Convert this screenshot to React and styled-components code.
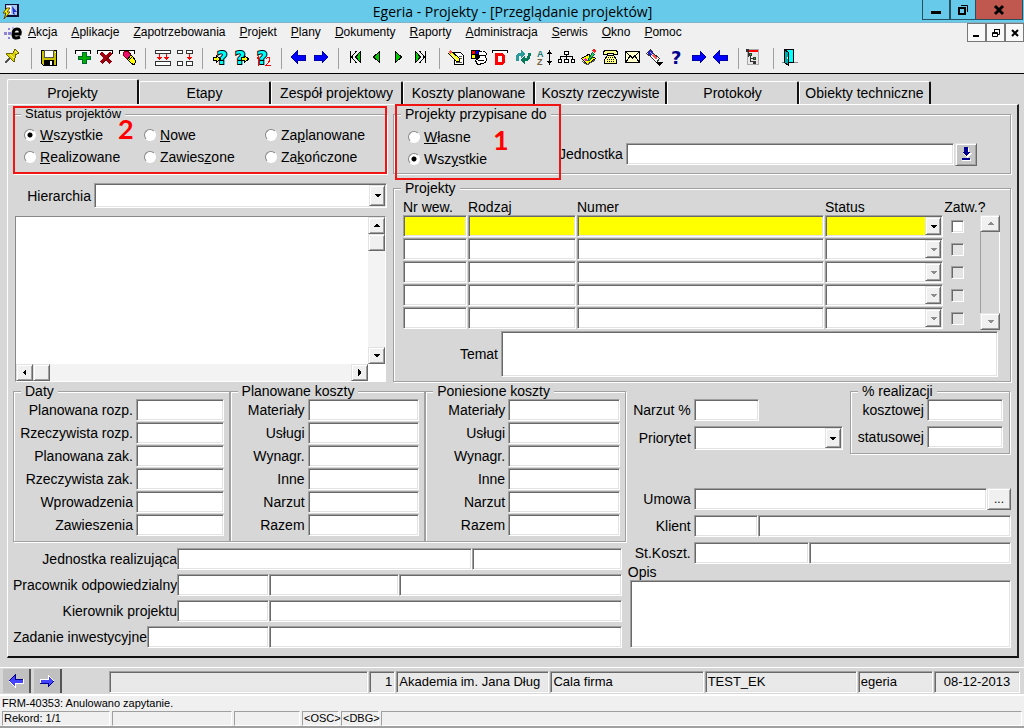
import React, { useState } from 'react'

import styled, { createGlobalStyle, css } from 'styled-components'

const GlobalStyle = createGlobalStyle`
	* {
		box-sizing: border-box;
	}
	body {
		margin: 0;
		background: #d7d7d7;
		color: #000;
		font-family: 'Liberation Sans', Arial, sans-serif;
		font-size: 14px;
		line-height: 16px;
	}
	input,
	select,
	textarea,
	button {
		font: inherit;
		color: inherit;
		margin: 0;
		padding: 0;
		border-radius: 0;
	}
`

const MENU = [
	['', 'A', 'kcja'],
	['', 'A', 'plikacje'],
	['', 'Z', 'apotrzebowania'],
	['', 'P', 'rojekt'],
	['', 'P', 'lany'],
	['', 'D', 'okumenty'],
	['', 'R', 'aporty'],
	['', 'A', 'dministracja'],
	['', 'S', 'erwis'],
	['', 'O', 'kno'],
	['', 'P', 'omoc'],
]

const TABS = [
	'Projekty',
	'Etapy',
	'Zespół projektowy',
	'Koszty planowane',
	'Koszty rzeczywiste',
	'Protokoły',
	'Obiekty techniczne',
]

const STATUSES = [
	['', 'W', 'szystkie'],
	['', 'N', 'owe'],
	['Za', 'p', 'lanowane'],
	['', 'R', 'ealizowane'],
	['Zawies', 'z', 'one'],
	['Za', 'k', 'ończone'],
]

const OWNERS = [
	['', 'W', 'łasne'],
	['Wsz', 'y', 'stkie'],
]

const DATES = [
	'Planowana rozp.',
	'Rzeczywista rozp.',
	'Planowana zak.',
	'Rzeczywista zak.',
	'Wprowadzenia',
	'Zawieszenia',
]

const COSTS = ['Materiały', 'Usługi', 'Wynagr.', 'Inne', 'Narzut', 'Razem']

const slot = (
	<path d='M2.5 7V3.5H17.5V7' fill='#fff' stroke='#000' />
)
const leftArrow = <path d='M3 10L9 4V8H17V13H9V16Z' fill='#00f' stroke='#00a' />
const rightArrow = <path d='M18 10L12 4V8H4V13H12V16Z' fill='#00f' stroke='#00a' />
const cyanMark = (x) => (
	<text
		x={x}
		y='17'
		fontFamily='DejaVu Sans'
		fontSize='18'
		fontWeight='bold'
		fill='#0ff'
		stroke='#000'
		strokeWidth='2'
		paintOrder='stroke'
	>
		?
	</text>
)

// toolbar drawings on a 22x22 grid, 'sep' is a divider
const TOOLS = [
	['Przypnij', <>
		<path d='M2 16L7 11' stroke='#555' strokeWidth='2' />
		<path d='M3 7L7 6L10 6L12 2L16 6L12 8L12 11L11 15Z' fill='#dcd000' stroke='#6b6400' />
		<path d='M7 7L11 11M12 4L14 6' stroke='#fff68a' />
	</>],
	'sep',
	['Zapisz', <>
		<path d='M3.5 3.5H18.5V18.5H5.5L3.5 16.5Z' fill='#c8c000' stroke='#000' />
		<path d='M6.5 3.5H15.5V10.5H6.5Z' fill='#fff' stroke='#555' />
		<path d='M6 13H16V18H6Z' fill='#000' />
		<path d='M12 14H14V18H12Z' fill='#fff' />
		<path d='M17 5V6' stroke='#fff' />
	</>],
	'sep',
	['Dodaj', <>
		{slot}
		<path d='M9.5 5.5H13.5V9.5H17.5V12.5H13.5V16.5H9.5V12.5H5.5V9.5H9.5Z' fill='#00b000' stroke='#063' />
	</>],
	['Usuń', <>
		{slot}
		<path d='M6 6L16 16M16 6L6 16' stroke='#a00010' strokeWidth='3' />
		<path d='M8 16L16 8' stroke='#500' />
	</>],
	['Wyczyść', <>
		{slot}
		<path d='M7 5L11 4L19 14L17 18L14 16L6 8Z' fill='#ff0' stroke='#000' />
		<path d='M7 5L11 4L14 8L10 12L6 8Z' fill='#e8106c' stroke='#800' />
		<path d='M11 12L14 8M12 13L15 10' stroke='#000' />
	</>],
	'sep',
	['Wstaw rekord', <>
		<path d='M3.5 3.5H18.5V6.5H3.5ZM3.5 14.5H18.5V18.5H3.5Z' fill='#fff' stroke='#333' />
		<path d='M7.5 7V12M14.5 7V12' stroke='#f00' />
		<path d='M5 10H10L7.5 13ZM12 10H17L14.5 13Z' fill='#f00' />
	</>],
	['Powiel rekord', <>
		<path d='M3.5 3.5H8.5V6.5H3.5ZM12.5 3.5H18.5V6.5H12.5ZM3.5 14.5H8.5V18.5H3.5ZM12.5 14.5H18.5V18.5H12.5Z' fill='#fff' stroke='#333' />
		<path d='M15.5 7V12' stroke='#f00' />
		<path d='M13 10H18L15.5 13Z' fill='#f00' />
	</>],
	'sep',
	['Wprowadź zapytanie', <>
		{cyanMark(8)}
		<path d='M4.5 10.5H7.5V8.5L11.5 12L7.5 15.5V13.5H4.5Z' fill='#ff0' stroke='#000' />
	</>],
	['Wykonaj zapytanie', <>
		{cyanMark(4)}
		<path d='M10.5 10.5H13.5V8.5L17.5 12L13.5 15.5V13.5H10.5Z' fill='#ff0' stroke='#000' />
	</>],
	['Policz rekordy', <>
		{cyanMark(4)}
		<path d='M4 12L5.5 10V19M13 12Q16 9 17 12Q17 14 13 18.5H18' fill='none' stroke='#f00' />
	</>],
	'sep',
	['Poprzedni blok', leftArrow],
	['Następny blok', rightArrow],
	'sep',
	['Pierwszy rekord', <>
		<path d='M5.5 4V16M11.5 4L6.5 10L11.5 16' fill='none' stroke='#000' strokeWidth='1' />
		<path d='M15.5 4.5V15.5L10.5 10Z' fill='#0c0' stroke='#000' />
	</>],
	['Poprzedni rekord', <path d='M12.5 4.5V15.5L6.5 10Z' fill='#0c0' stroke='#000' />],
	['Następny rekord', <path d='M6.5 4.5V15.5L12.5 10Z' fill='#0c0' stroke='#000' />],
	['Ostatni rekord', <>
		<path d='M4.5 4.5V15.5L9.5 10Z' fill='#0c0' stroke='#000' />
		<path d='M8.5 4L13.5 10L8.5 16M14.5 4V16' fill='none' stroke='#000' />
	</>],
	'sep',
	['Edytuj', <>
		<path d='M8.5 5.5H14.5L17.5 8.5V17.5H8.5Z' fill='#fff' stroke='#000' />
		<path d='M13 9.5H16M13 11.5H16M10 15.5H16' stroke='#555' />
		<path d='M4.5 3.5L13.5 11.5V14.5H10.5L2.5 6.5Z' fill='#ff0' stroke='#000' />
		<path d='M5 7L11 13' stroke='#fff' />
		<path d='M4 3L6 5L4 7L2 5Z' fill='#f55' />
	</>],
	['Załączniki', <>
		<path d='M3 3H12V12H3Z' fill='#000' />
		<path d='M4 4H7V7H4Z' fill='#f00' />
		<path d='M8 4H11V7H8Z' fill='#00f' />
		<path d='M4 8H7V11H4Z' fill='#ff0' />
		<path d='M10.5 5.5Q15 2 18.5 6.5L17.5 9.5Q20 15 15.5 16.5L9.5 17.5L7.5 13.5L11.5 10.5Z' fill='#fff' stroke='#000' />
		<path d='M12 8H17M10 13H16' stroke='#000' />
	</>],
	['Dokument', <>
		<path d='M2.5 6V3.5H17.5V6' fill='#fff' stroke='#000' />
		<path d='M6.5 7.5H10Q14 7.5 14 12Q14 16.5 10 16.5H6.5Z' fill='none' stroke='#f00' strokeWidth='3' />
	</>],
	['Odśwież', <>
		<path d='M5 14V11Q5 7 10 7' fill='none' stroke='#2a9a9a' strokeWidth='3' />
		<path d='M9 3L14 7L9 11Z' fill='#2a9a9a' />
		<path d='M17 6V9Q17 13 12 13' fill='none' stroke='#067a5a' strokeWidth='3' />
		<path d='M13 9L8 13L13 17Z' fill='#067a5a' />
	</>],
	['Sortuj', <>
		<text x='3' y='10' fontSize='9' fontWeight='bold' fill='#167878'>A</text>
		<text x='3' y='18' fontSize='9' fontWeight='bold' fill='#706040'>Z</text>
		<path d='M15.5 4V17' stroke='#000' />
		<path d='M13 7L15.5 3L18 7ZM13 14L15.5 18L18 14Z' fill='#000' />
	</>],
	['Struktura', <>
		<path d='M8.5 4.5H12.5V7.5H8.5ZM2.5 12.5H5.5V15.5H2.5ZM8.5 12.5H12.5V15.5H8.5ZM15.5 12.5H18.5V15.5H15.5Z' fill='#fff' stroke='#000' />
		<path d='M10.5 8V12M4.5 12V9.5H16.5V12' fill='none' stroke='#000' />
	</>],
	['Notatka', <>
		<path d='M3.5 11.5L10.5 7.5L17.5 11.5L9.5 17.5Z' fill='#ff0' stroke='#000' />
		<path d='M4 14L9 18L17 13' fill='none' stroke='#555' />
		<path d='M9.5 13.5L14.5 5.5L16.5 7.5L11.5 13.5Z' fill='#3c6' stroke='#063' />
		<path d='M15 5L17 3' stroke='#f22' strokeWidth='3' />
		<path d='M7 12L9 14' stroke='#f0f' strokeWidth='2' />
	</>],
	['Telefon', <>
		<path d='M3.5 7.5V4.5L5.5 3.5H15.5L17.5 4.5V7.5H13.5V6.5H7.5V7.5Z' fill='#ff8' stroke='#000' />
		<path d='M7.5 8.5H13.5L16.5 12.5V16.5H4.5V12.5Z' fill='#ff8' stroke='#000' />
		<path d='M8 10.5H13M7 12.5H14M7 14.5H14' stroke='#000' strokeDasharray='1 1' />
	</>],
	['Poczta', <>
		<path d='M3.5 4.5H17.5V15.5H3.5Z' fill='#ffc' stroke='#000' />
		<path d='M4 5L10.5 11L17 5M4 15L8 9M17 15L13 9' fill='none' stroke='#000' />
	</>],
	['Latarka', <>
		<path d='M2.5 6.5L6.5 2.5L9.5 6.5L15.5 11.5L12.5 15.5L6.5 9.5Z' fill='#fff' stroke='#333' />
		<path d='M3 6L6 3L9 6L6 9Z' fill='#22c' />
		<path d='M6 5L8 7' stroke='#aaf' />
		<path d='M9 8L13 12' stroke='#f55' strokeWidth='2' />
		<path d='M12 15H19L15.5 19Z' fill='#000' />
	</>],
	['Pomoc', <text x='5' y='17' fontFamily='DejaVu Sans' fontSize='18' fontWeight='bold' fill='#000090'>?</text>],
	['Dalej', rightArrow],
	['Wstecz', leftArrow],
	'sep',
	['Drzewo', <>
		<path d='M2.5 2.5H13.5V17.5H2.5Z' fill='#e8e8e8' stroke='#aaa' />
		<path d='M4 3H13V5H4Z' fill='#f00' />
		<path d='M3.5 4V10M4 7.5H6M5.5 8V14.5H9M5.5 11.5H9' fill='none' stroke='#333' />
		<path d='M1 2H4V5H1ZM4 6H7V9H4ZM8 10H11V13H8ZM8 14H11V17H8Z' fill='#333' />
		<path d='M9 11H10V12H9ZM5 7H6V8H5Z' fill='#0d0' />
	</>],
	'sep',
	['Wyjście', <>
		<path d='M2 15.5H18' stroke='#888' />
		<path d='M4.5 2.5H13.5V15.5H4.5Z' fill='#0ff' stroke='#000' />
		<path d='M4.5 2.5L8.5 5.5V18.5L4.5 15.5Z' fill='#0aa' stroke='#000' />
		<path d='M7 10V12' stroke='#fff' />
	</>],
]

const Mnemonic = ({ parts }) => (
	<span>
		{parts[0]}
		<u>{parts[1]}</u>
		{parts[2]}
	</span>
)

const Arrow = ({ dir, off }) => {
	const d = {
		up: 'M0 5H7L4 2H3Z',
		down: 'M0 2H7L4 5H3Z',
		left: 'M5 0V7L2 4V3Z',
		right: 'M2 0V7L5 4V3Z',
	}
	return (
		<svg width='7' height='7' viewBox='0 0 7 7' aria-hidden='true' shapeRendering='crispEdges'>
			<path d={d[dir]} fill={off ? '#8c8c8c' : '#000'} />
		</svg>
	)
}

const Dropdown = ({ id, label, active, off, height }) => (
	<Combo $active={active} $height={height}>
		<select id={id} aria-label={label} disabled={off}>
			<option></option>
		</select>
		<ComboArrow>
			<Arrow dir='down' off={off} />
		</ComboArrow>
	</Combo>
)

const FieldColumn = ({ title, names, label, prefix }) => (
	<Group>
		<Legend>{title}</Legend>
		<Stack>
			{names.map((name, i) => (
				<Row key={name}>
					<Label $width={label} htmlFor={prefix + i}>
						{name}
					</Label>
					<Field id={prefix + i} />
				</Row>
			))}
		</Stack>
	</Group>
)

const Header = () => (
	<header>
		<TitleBar>
			<svg width='18' height='18' viewBox='0 0 18 18' aria-hidden='true'>
				<path d='M3 2H17V15H3Z' fill='#113' />
				<path d='M4 3H15V13H4Z' fill='#aac8f0' />
				<path d='M5 4H9V12H5Z' fill='#fff' />
				<path d='M10 4L15 10L12 10L13 13L11 12Z' fill='#23c' />
				<path d='M5 6L1 11H4L2 17L8 10H5L8 6Z' fill='#ff0' stroke='#640' />
			</svg>
			<Title>Egeria - Projekty - [Przeglądanie projektów]</Title>
			<WinButtons>
				<WinButton $width={28} aria-label='Minimalizuj'>
					<svg width='12' height='12'><path d='M1 7H11V10H1Z' /></svg>
				</WinButton>
				<WinButton $width={26} aria-label='Przywróć'>
					<svg width='12' height='12' fill='none' stroke='#000'>
						<path d='M4 1.5H10.5V8' strokeWidth='1' />
						<path d='M2 4H8V10H2Z' strokeWidth='2' />
					</svg>
				</WinButton>
				<WinButton $width={47} $close aria-label='Zamknij'>
					<svg width='12' height='12' stroke='#000' strokeWidth='3'>
						<path d='M2 2L10 10M10 2L2 10' />
					</svg>
				</WinButton>
			</WinButtons>
		</TitleBar>
		<MenuBar>
			<svg width='19' height='16' viewBox='0 0 19 16' aria-hidden='true'>
				<path d='M0 7H3V10H0ZM4 3H6V5H4ZM4 7H7V10H4ZM4 12H6V14H4Z' fill='#8c84d8' />
				<path d='M8 2H10V4H8ZM8 12H10V14H8Z' fill='#b8b4ea' />
				<path d='M16 12Q9 15 9 9Q9 4 13 4Q17 4 16 9H10' fill='none' stroke='#000' strokeWidth='3' />
			</svg>
			<Menu>
				{MENU.map((m) => (
					<MenuItem key={m.join('')}>
						<Mnemonic parts={m} />
					</MenuItem>
				))}
			</Menu>
			<MdiButton aria-label='Minimalizuj okno'>
				<svg width='10' height='10'><path d='M1 7H7V9H1Z' /></svg>
			</MdiButton>
			<MdiButton aria-label='Przywróć okno'>
				<svg width='10' height='10' fill='none' stroke='#000'>
					<path d='M3.5 4V1.5H8.5V6.5H7M3 1.5H9' />
					<path d='M1.5 4.5H6.5V8.5H1.5ZM1 5.5H7' />
				</svg>
			</MdiButton>
			<MdiButton aria-label='Zamknij okno'>
				<svg width='10' height='10' stroke='#000' strokeWidth='2'>
					<path d='M2 2L8 8M8 2L2 8' />
				</svg>
			</MdiButton>
		</MenuBar>
		<Toolbar>
			{TOOLS.map((t, i) =>
				t === 'sep' ? (
					<Separator key={i} />
				) : (
					<Tool key={i} aria-label={t[0]}>
						<svg width='22' height='22' viewBox='0 0 22 22' shapeRendering='crispEdges'>
							{t[1]}
						</svg>
					</Tool>
				),
			)}
		</Toolbar>
	</header>
)

const Tree = () => (
	<TreeBox>
		<TreeView />
		<Scroll $vertical>
			<ScrollButton aria-label='W górę'><Arrow dir='up' /></ScrollButton>
			<Thumb />
			<Track />
			<ScrollButton aria-label='W dół'><Arrow dir='down' /></ScrollButton>
		</Scroll>
		<Scroll>
			<ScrollButton aria-label='W lewo'><Arrow dir='left' /></ScrollButton>
			<Thumb />
			<Track />
			<ScrollButton aria-label='W prawo'><Arrow dir='right' /></ScrollButton>
		</Scroll>
	</TreeBox>
)

const ProjectTable = () => (
	<TableArea>
		<TableBox>
			<Table>
				<colgroup>
					<Col $width='11.5%' />
					<Col $width='19.3%' />
					<Col $width='43.9%' />
					<Col $width='21.1%' />
					<Col $width='auto' />
				</colgroup>
				<thead>
					<tr>
						<th>Nr wew.</th>
						<th>Rodzaj</th>
						<th>Numer</th>
						<th>Status</th>
						<th>Zatw.?</th>
					</tr>
				</thead>
				<tbody>
					{[0, 1, 2, 3, 4].map((r) => (
						<tr key={r}>
							<td><Field aria-label='Nr wew.' $active={r === 0} /></td>
							<td><Field aria-label='Rodzaj' $active={r === 0} /></td>
							<td><Field aria-label='Numer' $active={r === 0} /></td>
							<td><Dropdown label='Status' active={r === 0} off={r > 0} height={22} /></td>
							<CheckCell><Check type='checkbox' aria-label='Zatwierdzony' disabled={r > 0} /></CheckCell>
						</tr>
					))}
				</tbody>
			</Table>
		</TableBox>
		<TableScroll>
			<ScrollButton disabled aria-label='Poprzednie wiersze'><Arrow dir='up' off /></ScrollButton>
			<PlainTrack />
			<ScrollButton disabled aria-label='Następne wiersze'><Arrow dir='down' off /></ScrollButton>
		</TableScroll>
	</TableArea>
)

const App = () => {
	const [tab, setTab] = useState(0)
	const [status, setStatus] = useState(0)
	const [owner, setOwner] = useState(1)
	return (
		<Page>
			<GlobalStyle />
			<Header />
			<Main>
				<Tabs role='tablist'>
					{TABS.map((name, i) => (
						<Tab key={name} role='tab' aria-selected={i === tab} $on={i === tab} onClick={() => setTab(i)}>
							{name}
						</Tab>
					))}
				</Tabs>
				<Panel>
					<TopGrid>
						<Column>
							<Marked>
								<Group>
									<SmallLegend>Status projektów</SmallLegend>
									<StatusRadios>
										{STATUSES.map((s, i) => (
											<RadioLabel key={i}>
												<Radio type='radio' name='status' checked={status === i} onChange={() => setStatus(i)} />
												<Mnemonic parts={s} />
											</RadioLabel>
										))}
									</StatusRadios>
								</Group>
								<StatusFrame />
								<StatusNumber>2</StatusNumber>
							</Marked>
							<HierarchyRow>
								<Label $width={81} htmlFor='hierarchia'>Hierarchia</Label>
								<Dropdown id='hierarchia' height={25} />
							</HierarchyRow>
							<Tree />
						</Column>
						<Column>
							<Marked>
								<Group>
									<Legend>Projekty przypisane do</Legend>
									<OwnerRow>
										<OwnerRadios>
											{OWNERS.map((o, i) => (
												<RadioLabel key={i}>
													<Radio type='radio' name='owner' checked={owner === i} onChange={() => setOwner(i)} />
													<Mnemonic parts={o} />
												</RadioLabel>
											))}
										</OwnerRadios>
										<UnitRow>
											<Label htmlFor='jednostka'>Jednostka</Label>
											<Field id='jednostka' />
											<ListButton aria-label='Lista jednostek'>
												<svg width='11' height='15' shapeRendering='crispEdges'>
													<path d='M3 1H8V6H11L6 11L1 6H3ZM1 12H10V14H1Z' fill='#fff' />
													<path d='M3 0H7V5H9L5 9L1 5H3ZM1 11H9V13H1Z' fill='#000090' />
												</svg>
											</ListButton>
										</UnitRow>
									</OwnerRow>
								</Group>
								<OwnerFrame />
								<OwnerNumber>1</OwnerNumber>
							</Marked>
							<ProjectsGroup>
								<Legend>Projekty</Legend>
								<ProjectTable />
								<TopicRow>
									<Label $width={107} htmlFor='temat'>Temat</Label>
									<Area id='temat' $height={46} />
								</TopicRow>
							</ProjectsGroup>
						</Column>
					</TopGrid>
					<BottomGrid>
						<div>
							<Costs>
								<FieldColumn title='Daty' names={DATES} label={122} prefix='data' />
								<FieldColumn title='Planowane koszty' names={COSTS} label={77} prefix='plan' />
								<FieldColumn title='Poniesione koszty' names={COSTS} label={82} prefix='poniesione' />
							</Costs>
							<Details>
								<Row>
									<WideLabel $width={164} htmlFor='realizujaca'>Jednostka realizująca</WideLabel>
									<Field id='realizujaca' $grow={295} />
									<Field aria-label='Nazwa jednostki' $grow={149} />
								</Row>
								<Row>
									<WideLabel $width={164} htmlFor='pracownik'>Pracownik odpowiedzialny</WideLabel>
									<Field id='pracownik' $grow={91} />
									<Field aria-label='Imię' $grow={130} />
									<Field aria-label='Nazwisko' $grow={223} />
								</Row>
								<Row>
									<WideLabel $width={164} htmlFor='kierownik'>Kierownik projektu</WideLabel>
									<Field id='kierownik' $grow={91} />
									<Field aria-label='Nazwisko kierownika' $grow={354} />
								</Row>
								<Row>
									<WideLabel $width={134} htmlFor='zadanie'>Zadanie inwestycyjne</WideLabel>
									<Field id='zadanie' $grow={121} />
									<Field aria-label='Nazwa zadania' $grow={354} />
								</Row>
							</Details>
						</div>
						<div>
							<RateRow>
								<RateFields>
									<Row>
										<Label $width={66} htmlFor='narzut'>Narzut %</Label>
										<Field id='narzut' $size={65} />
									</Row>
									<Row>
										<Label $width={66} htmlFor='priorytet'>Priorytet</Label>
										<Dropdown id='priorytet' height={24} />
									</Row>
								</RateFields>
								<Group>
									<Legend>% realizacji</Legend>
									<ProgressStack>
										<Row>
											<Label $width={76} htmlFor='kosztowej'>kosztowej</Label>
											<Field id='kosztowej' />
										</Row>
										<Row>
											<Label $width={76} htmlFor='statusowej'>statusowej</Label>
											<Field id='statusowej' />
										</Row>
									</ProgressStack>
								</Group>
							</RateRow>
							<Contract>
								<Row>
									<Label $width={66} htmlFor='umowa'>Umowa</Label>
									<Field id='umowa' />
									<MoreButton>...</MoreButton>
								</Row>
								<Row>
									<Label $width={66} htmlFor='klient'>Klient</Label>
									<Field id='klient' $grow={63} />
									<Field aria-label='Nazwa klienta' $grow={253} />
								</Row>
								<Row>
									<Label $width={66} htmlFor='koszt'>St.Koszt.</Label>
									<Field id='koszt' $grow={114} />
									<Field aria-label='Nazwa stanowiska' $grow={202} />
								</Row>
							</Contract>
							<OpisLabel htmlFor='opis'>Opis</OpisLabel>
							<OpisArea>
								<Area id='opis' $height={68} />
							</OpisArea>
						</div>
					</BottomGrid>
				</Panel>
			</Main>
			<InfoBar>
				<BigButton aria-label='Wstecz'>
					<svg width='16' height='14' shapeRendering='crispEdges'>
						<path d='M1 7L7 1V5H15V9H7V13Z' fill='#44f' stroke='#fff' />
						<path d='M1 7L7 1V5H15' fill='none' stroke='#008' />
					</svg>
				</BigButton>
				<BigButton aria-label='Dalej'>
					<svg width='16' height='14' shapeRendering='crispEdges'>
						<path d='M15 7L9 1V5H1V9H9V13Z' fill='#44f' stroke='#fff' />
						<path d='M15 7L9 13V9H1' fill='none' stroke='#008' />
					</svg>
				</BigButton>
				<InfoCells>
					<Info />
					<Info $align='right'>1</Info>
					<Info>Akademia im. Jana Dług</Info>
					<Info>Cala firma</Info>
					<Info>TEST_EK</Info>
					<Info>egeria</Info>
					<Info $align='center'>08-12-2013</Info>
				</InfoCells>
			</InfoBar>
			<Footer>
				<Message>FRM-40353: Anulowano zapytanie.</Message>
				<StatusCells>
					<Cell>Rekord: 1/1</Cell>
					<Cell />
					<Cell />
					<Cell>&lt;OSC&gt;</Cell>
					<Cell>&lt;DBG&gt;</Cell>
					<Cell />
				</StatusCells>
			</Footer>
		</Page>
	)
}
export default App

const sunken = css`
	border: 1px solid;
	border-color: #a0a0a0 #fff #fff #a0a0a0;
	box-shadow: inset 1px 1px 0 #696969, inset -1px -1px 0 #e3e3e3;
`
const raised = css`
	border: 1px solid;
	border-color: #e3e3e3 #696969 #696969 #e3e3e3;
	box-shadow: inset 1px 1px 0 #fff, inset -1px -1px 0 #a0a0a0;
	background: #f0f0f0;
`
const Page = styled.div`
	min-height: 100vh;
	display: flex;
	flex-direction: column;
`
const TitleBar = styled.div`
	display: flex;
	height: 23px;
	padding: 2px 1px 0 2px;
	background: #67caea;
	border-bottom: 1px solid #7fb4c8;
`
const Title = styled.h1`
	flex: 1;
	margin: 0;
	padding-left: 83px;
	text-align: center;
	font: 14px/20px 'Open Sans', sans-serif;
	white-space: nowrap;
`
const WinButtons = styled.div`
	display: flex;
	height: 20px;
	margin-top: -2px;
`
const WinButton = styled.button`
	width: ${(p) => p.$width}px;
	display: flex;
	align-items: center;
	justify-content: center;
	border: 1px solid #24505f;
	border-top: none;
	border-left-width: ${(p) => (p.$close ? 0 : 1)}px;
	background: ${(p) => (p.$close ? '#c1584f' : '#67caea')};
`
const MenuBar = styled.div`
	display: flex;
	height: 20px;
	padding-left: 4px;
	background: #f0f0f0;

	svg {
		flex: none;
		margin-top: 2px;
	}
`
const Menu = styled.nav`
	flex: 1;
	display: flex;
	gap: 14px;
	padding-left: 5px;
`
const MenuItem = styled.button`
	padding-bottom: 2px;
	border: none;
	background: none;
	font-size: 12px;
	line-height: 18px;
`
const MdiButton = styled.button`
	width: 19px;
	height: 19px;
	border: 1px solid #787878;
	background: #f8f8f8;
`
const Toolbar = styled.div`
	display: flex;
	align-items: center;
	height: 31px;
	padding-left: 3px;
	background: #f0f0f0;
	border-bottom: 1px solid #000;
`
const Tool = styled.button`
	width: 22px;
	height: 22px;
	border: none;
	background: none;

	svg {
		display: block;
	}
`
const Separator = styled.span`
	width: 1px;
	height: 21px;
	margin: 0 6px;
	background: #a0a0a0;
`
const Main = styled.main`
	flex: 1;
	padding: 5px 5px 8px 7px;
`
const Tabs = styled.div`
	display: flex;
	align-items: flex-end;
	height: 25px;
`
const Tab = styled.button`
	flex: 0 1 132px;
	height: ${(p) => (p.$on ? 25 : 23)}px;
	padding-top: ${(p) => (p.$on ? 2 : 0)}px;
	border: solid;
	border-width: 1px 2px 0 1px;
	border-color: #fff #111 #fff #fff;
	border-radius: 2px 2px 0 0;
	background: #d7d7d7;
	white-space: nowrap;
`
const Panel = styled.section`
	padding: 1px 6px 8px 5px;
	border: solid;
	border-width: 1px 2px 2px 1px;
	border-color: #fff #222 #111 #fff;
`
const TopGrid = styled.div`
	display: grid;
	grid-template-columns: 374fr 618fr;
	column-gap: 6px;
`
const Column = styled.div`
	display: flex;
	flex-direction: column;
	min-width: 0;
`
const Marked = styled.div`
	position: relative;
`
const Group = styled.fieldset`
	min-width: 0;
	margin: 0;
	padding: 0;
	border: 1px solid #a0a0a0;
	box-shadow: 1px 1px 0 #fff, inset 1px 1px 0 #fff;
`
const ProjectsGroup = styled(Group)`
	margin-top: 6px;
`
const Legend = styled.legend`
	margin-left: 7px;
	padding: 0 4px;
	background: #d7d7d7;
`
const SmallLegend = styled(Legend)`
	font-size: 13px;
`
const StatusRadios = styled.div`
	display: grid;
	grid-template-columns: 120fr 121fr 121fr;
	padding: 2px 0 5px 10px;
`
const RadioLabel = styled.label`
	display: flex;
	align-items: center;
	gap: 4px;
	height: 22px;
`
const Radio = styled.input`
	appearance: none;
	flex: none;
	width: 12px;
	height: 12px;
	border: 1px solid;
	border-color: #888 #fff #fff #888;
	border-radius: 50%;
	background: #fff;

	&:checked {
		background: radial-gradient(#000 2px, #fff 3px);
	}
`
const Frame = styled.div`
	position: absolute;
	border: 2px solid #f01414;
	pointer-events: none;
`
const StatusFrame = styled(Frame)`
	inset: 0;
`
const OwnerFrame = styled(Frame)`
	top: -2px;
	bottom: -6px;
	left: 2px;
	width: 166px;
`
const MarkNumber = styled.strong`
	position: absolute;
	color: #f00;
	font: bold 27px/20px Lato, sans-serif;
	pointer-events: none;
`
const StatusNumber = styled(MarkNumber)`
	top: 13px;
	left: 105px;
`
const OwnerNumber = styled(MarkNumber)`
	top: 24px;
	left: 100px;
`
const HierarchyRow = styled.div`
	display: flex;
	align-items: center;
	margin-top: 9px;
`
const Label = styled.label`
	flex: none;
	width: ${(p) => (p.$width ? p.$width + 'px' : 'auto')};
	padding-right: 3px;
	text-align: right;
	white-space: nowrap;
`
const WideLabel = styled(Label)`
	padding-right: 0;
`
const Field = styled.input`
	${sunken}
	display: block;
	flex: ${(p) => (p.$size ? 'none' : `${p.$grow || 1} 1 0`)};
	width: ${(p) => (p.$size ? p.$size + 'px' : '100%')};
	min-width: 0;
	height: 22px;
	outline: none;
	background: ${(p) => (p.$active ? '#ff0' : '#fff')};
`
const Area = styled.textarea`
	${sunken}
	display: block;
	flex: 1;
	width: 100%;
	min-width: 0;
	height: ${(p) => p.$height}px;
	outline: none;
	resize: none;
	background: #fff;
`
const Combo = styled.div`
	${sunken}
	position: relative;
	flex: 1;
	min-width: 0;
	height: ${(p) => p.$height}px;
	padding: 1px;
	background: ${(p) => (p.$active ? '#ff0' : '#fff')};

	select {
		appearance: none;
		display: block;
		width: 100%;
		height: 100%;
		border: none;
		outline: none;
		background: transparent;
	}
`
const ComboArrow = styled.span`
	${raised}
	position: absolute;
	top: 1px;
	right: 1px;
	bottom: 1px;
	width: 16px;
	display: flex;
	align-items: center;
	justify-content: center;
	pointer-events: none;
`
const TreeBox = styled.div`
	flex: 1;
	display: grid;
	grid-template-columns: 1fr 17px;
	grid-template-rows: 1fr 17px;
	margin: 8px 1px 0 2px;
	border: 1px solid;
	border-color: #888 #fff #fff #888;
	background: #fff;
`
const TreeView = styled.div`
	background: #fff;
`
const Scroll = styled.div`
	display: flex;
	flex-direction: ${(p) => (p.$vertical ? 'column' : 'row')};
	background: #f3f3f3;
`
const ScrollButton = styled.button`
	${raised}
	flex: none;
	min-width: 17px;
	height: 17px;
	display: flex;
	align-items: center;
	justify-content: center;
`
const Thumb = styled.div`
	${raised}
	flex: none;
	width: 17px;
	height: 17px;
`
const Track = styled.div`
	flex: 1;
`
const OwnerRow = styled.div`
	display: flex;
	align-items: center;
	padding: 4px 33px 3px 14px;
`
const OwnerRadios = styled.div`
	width: 151px;
`
const UnitRow = styled.div`
	flex: 1;
	display: flex;
	align-items: center;
	padding-top: 12px;
`
const ListButton = styled.button`
	${raised}
	width: 22px;
	height: 23px;
	margin-left: 1px;
	background: #c6c6c6;
	display: flex;
	align-items: center;
	justify-content: center;
`
const TableArea = styled.div`
	display: flex;
	padding: 3px 10px 0 9px;
`
const TableBox = styled.div`
	flex: 1;
	min-width: 0;
`
const Table = styled.table`
	width: 100%;
	table-layout: fixed;
	border-collapse: collapse;

	th {
		height: 16px;
		padding: 0;
		font-weight: normal;
		text-align: left;
		white-space: nowrap;
	}
	td {
		padding: 0 1px 1px 0;
	}
`
const Col = styled.col`
	width: ${(p) => p.$width};
`
const CheckCell = styled.td`
	&& {
		padding-left: 7px;
	}
`
const Check = styled.input`
	${sunken}
	appearance: none;
	display: block;
	width: 13px;
	height: 13px;
	background: #fff;

	&:disabled {
		background: #e4e4e4;
	}
`
const TableScroll = styled.div`
	display: flex;
	flex-direction: column;
	width: 20px;
	margin: 16px 0 0 12px;
`
const PlainTrack = styled.div`
	flex: 1;
	border: solid;
	border-width: 0 1px;
	border-color: #fff #fff #fff #a0a0a0;
`
const TopicRow = styled.div`
	display: flex;
	align-items: center;
	padding: 1px 12px 4px 0;
`
const BottomGrid = styled.div`
	display: grid;
	grid-template-columns: 614fr 384fr;
	column-gap: 2px;
	margin-top: 1px;
`
const Costs = styled.div`
	display: grid;
	grid-template-columns: 217fr 196fr 201fr;
`
const Stack = styled.div`
	display: grid;
	gap: 1px;
	padding: 0 5px 5px 0;
`
const Row = styled.div`
	display: flex;
	align-items: center;
	min-width: 0;
`
const Details = styled.div`
	display: grid;
	gap: 4px;
	padding: 6px 4px 0 0;
`
const RateRow = styled.div`
	display: grid;
	grid-template-columns: 215fr 160fr;
	column-gap: 7px;
	padding-right: 1px;
`
const RateFields = styled.div`
	display: grid;
	align-content: start;
	gap: 5px;
	padding-top: 16px;
`
const ProgressStack = styled.div`
	display: grid;
	gap: 5px;
	padding: 0 6px 5px 0;
`
const Contract = styled.div`
	display: grid;
	gap: 5px;
	margin-top: 34px;
`
const MoreButton = styled.button`
	${raised}
	width: 24px;
	height: 22px;
	font-size: 12px;
`
const OpisLabel = styled.label`
	display: block;
`
const OpisArea = styled.div`
	padding-left: 2px;
`
const InfoBar = styled.div`
	display: flex;
	gap: 3px;
	height: 29px;
	padding: 1px 4px 1px 3px;
	border-top: 1px solid #fff;
	border-bottom: 2px solid #fff;
`
const BigButton = styled.button`
	width: 28px;
	border: solid;
	border-width: 0 2px 0 0;
	border-color: #555;
	background: #c0c0c0;
	display: flex;
	align-items: center;
	justify-content: center;
`
const InfoCells = styled.div`
	flex: 1;
	display: grid;
	grid-template-columns: 259fr 26fr 153fr 153fr 152fr 75fr 86fr;
	column-gap: 1px;
	padding: 2px 0 0 44px;
`
const Info = styled.div`
	${sunken}
	min-width: 0;
	height: 22px;
	padding: 0 2px;
	overflow: hidden;
	background: #e9e9e9;
	font-size: 13px;
	line-height: 20px;
	text-align: ${(p) => p.$align || 'left'};
	white-space: nowrap;
`
const Footer = styled.footer`
	padding: 0 2px;
	background: #f0f0f0;
	border-bottom: 2px solid #a0a0a0;
	font-size: 11px;
	line-height: 15px;
`
const Message = styled.div`
	height: 15px;
`
const StatusCells = styled.div`
	display: grid;
	grid-template-columns: 108px 120px 66px 37px 38px 1fr;
	column-gap: 2px;
`
const Cell = styled.div`
	height: 15px;
	padding-left: 1px;
	border: 1px solid;
	border-color: #a0a0a0 #fff #fff #a0a0a0;
	line-height: 13px;
	white-space: nowrap;
`
